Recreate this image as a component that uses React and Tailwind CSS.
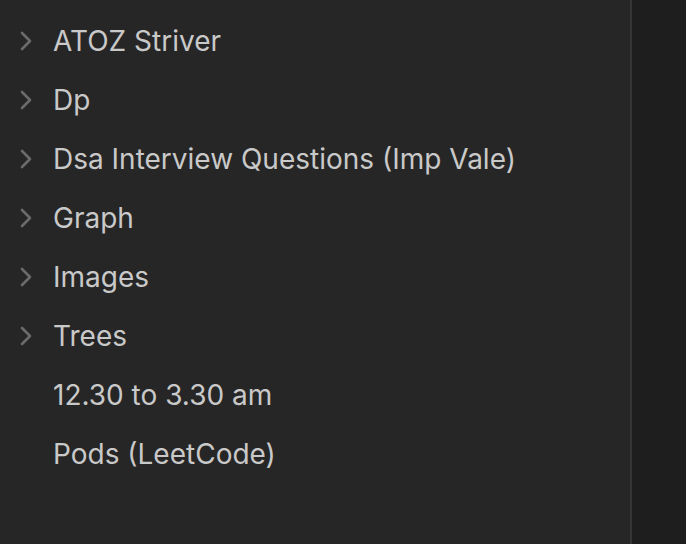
const items = [
  { name: "ATOZ Striver", folder: true },
  { name: "Dp", folder: true },
  { name: "Dsa Interview Questions (Imp Vale)", folder: true },
  { name: "Graph", folder: true },
  { name: "Images", folder: true },
  { name: "Trees", folder: true },
  { name: "12.30 to 3.30 am", folder: false },
  { name: "Pods (LeetCode)", folder: false },
];

function Chevron() {
  return (
    <svg width="14" height="20" viewBox="0 0 14 20" fill="none">
      <path d="M3 2 L11 10 L3 18" stroke="#6b6b6b" strokeWidth="2.6" strokeLinecap="round" strokeLinejoin="round" />
    </svg>
  );
}

export default function App() {
  return (
    <div className="flex h-[544px] w-[686px] bg-[#1e1e1e]" style={{ fontFamily: "Inter, 'Noto Sans', sans-serif" }}>
      <div className="w-[630px] bg-[#262626] pt-[11px]">
        {items.map((item) => (
          <div key={item.name} className="flex h-[59px] items-center">
            <div className="flex w-[53px] justify-start pl-[19px]">{item.folder && <Chevron />}</div>
            <span className="text-[28px] text-[#c9c9c9]">{item.name}</span>
          </div>
        ))}
      </div>
      <div className="w-[2px] bg-[#353535]" />
      <div className="flex-1" />
    </div>
  );
}
